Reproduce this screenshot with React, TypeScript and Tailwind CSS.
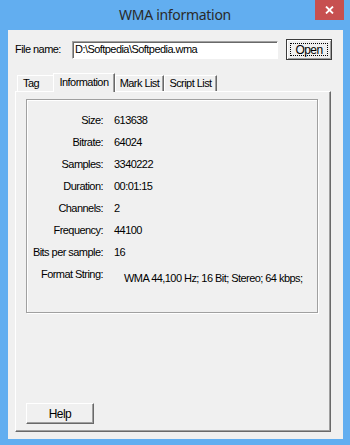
import React from 'react';

const rows: [string, string][] = [
  ['Size:', '613638'],
  ['Bitrate:', '64024'],
  ['Samples:', '3340222'],
  ['Duration:', '00:01:15'],
  ['Channels:', '2'],
  ['Frequency:', '44100'],
  ['Bits per sample:', '16'],
];

const tabs = [
  { label: 'Tag', w: 'w-[38px] justify-start pl-[5px]', active: false },
  { label: 'Information', w: 'w-[62px] justify-center', active: true },
  { label: 'Mark List', w: 'w-[49px] justify-center', active: false },
  { label: 'Script List', w: 'w-[53px] justify-center', active: false },
];

export default function App() {
  return (
    <div className="w-[350px] h-[445px] bg-[#62aef0] flex flex-col overflow-hidden font-['Liberation_Sans',Arial,sans-serif] text-[11px] tracking-[-0.55px] text-black">
      {/* title bar */}
      <div className="relative h-[30px] flex items-center justify-center">
        <span className="font-['Noto_Sans',sans-serif] text-[14px] tracking-[-0.3px] text-[#2a2a2a] mb-[2px]">
          WMA information
        </span>
        <div className="absolute right-[6px] top-0 w-[29px] h-[20px] bg-[#c75050] flex items-center justify-center">
          <svg width="9" height="8" viewBox="0 0 9 8">
            <path d="M1 0.5 L8 7.5 M8 0.5 L1 7.5" stroke="#fff" strokeWidth="1.8" />
          </svg>
        </div>
      </div>

      {/* client area */}
      <div className="flex-1 ml-[8px] mr-[7px] mb-[6px] bg-[#f0f0f0] flex flex-col">
        <div className="mt-[9px] h-[21px] flex items-center">
          <span className="pl-[7px] w-[64px]">File name:</span>
          <div className="w-[206px] h-[18px] bg-white border-t border-l border-[#a0a0a0] border-b border-r border-b-white border-r-white shadow-[inset_1px_1px_0_#696969] flex items-center pl-[2px]">
            D:\Softpedia\Softpedia.wma
          </div>
          <button className="ml-[8px] w-[46px] h-[21px] border border-[#3c3c3c] bg-[#f0f0f0] shadow-[inset_1px_1px_0_#fff,inset_-1px_-1px_0_#a0a0a0] p-[3px] flex">
            <span className="flex-1 border border-dotted border-black flex items-center justify-center text-[12px]">
              Open
            </span>
          </button>
        </div>

        {/* tabs */}
        <div className="mt-[13px] ml-[7px] pl-[2px] h-[18px] flex items-end">
          {tabs.map((t) =>
            t.active ? (
              <div
                key={t.label}
                className={`${t.w} relative z-10 -ml-[2px] -mb-px h-[19px] bg-[#f0f0f0] border-t border-l border-white border-r border-r-[#696969] shadow-[inset_-1px_0_0_#a0a0a0] flex items-center pb-[2px]`}
              >
                {t.label}
              </div>
            ) : (
              <div
                key={t.label}
                className={`${t.w} h-[16px] border-t border-l border-white border-r border-r-[#696969] shadow-[inset_-1px_0_0_#a0a0a0] flex items-center`}
              >
                {t.label}
              </div>
            )
          )}
        </div>

        {/* tab panel */}
        <div className="ml-[7px] w-[316px] h-[341px] border-t border-l border-white border-r border-b border-r-[#696969] border-b-[#696969] shadow-[inset_-1px_-1px_0_#a0a0a0] flex flex-col">
          <div className="mt-[7px] ml-[10px] w-[292px] h-[214px] border border-[#a0a0a0] shadow-[inset_1px_1px_0_#fff,1px_1px_0_#fff] pt-[9px]">
            {rows.map(([k, v]) => (
              <div key={k} className="h-[22px] flex items-center">
                <span className="w-[76px] text-right">{k}</span>
                <span className="ml-[11px]">{v}</span>
              </div>
            ))}
            <div className="flex items-start">
              <span className="w-[76px] text-right leading-[22px]">Format String:</span>
              <span className="ml-[21px] mt-[4px] leading-[22px]">WMA 44,100 Hz; 16 Bit; Stereo; 64 kbps;</span>
            </div>
          </div>

          <button className="mt-auto ml-[10px] mb-[7px] w-[68px] h-[21px] bg-[#f0f0f0] border-t border-l border-white border-r border-b border-r-[#696969] border-b-[#696969] shadow-[inset_-1px_-1px_0_#a0a0a0] flex items-center justify-center text-[12px]">
            Help
          </button>
        </div>
      </div>
    </div>
  );
}
